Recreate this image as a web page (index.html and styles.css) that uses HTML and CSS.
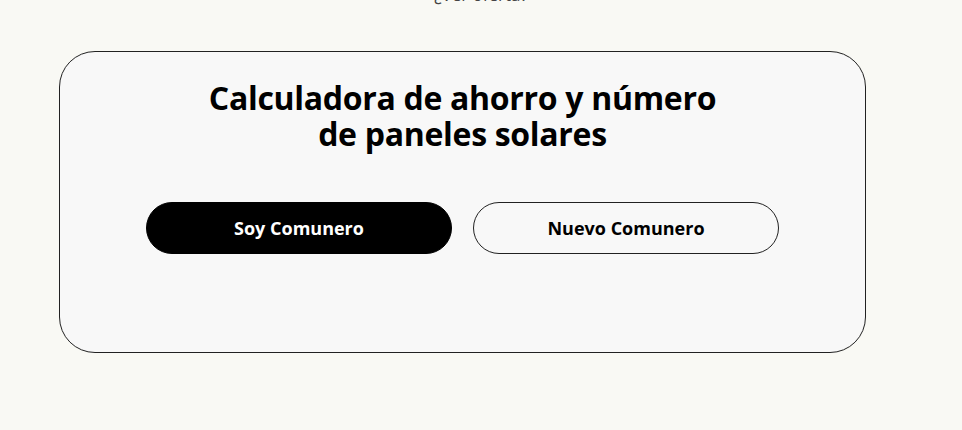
FILE: index.html
```html
<!DOCTYPE html>
<html lang="es">
<head>
<meta charset="utf-8">
<link rel="stylesheet" href="styles.css">
</head>
<body>
<p class="top-note">¿Ver oferta?</p>
<section class="card">
  <h1 class="title">Calculadora de ahorro y número<br>de paneles solares</h1>
  <div class="actions">
    <button class="btn btn-dark">Soy Comunero</button>
    <button class="btn btn-light">Nuevo Comunero</button>
  </div>
</section>
</body>
</html>
```
FILE: styles.css
```css
html, body {
  margin: 0;
  padding: 0;
  background: #f9f9f4;
  font-family: "Open Sans", "Liberation Sans", sans-serif;
  color: #000;
}
.top-note {
  margin: -14px 0 0;
  height: 18px;
  line-height: 18px;
  text-align: center;
  font-size: 17px;
  color: #444;
}
.card {
  box-sizing: border-box;
  width: 807px;
  height: 302px;
  margin: 47px 0 0 59px;
  background: #f8f8f8;
  border: 1px solid #222;
  border-radius: 36px;
  padding-top: 28px;
}
.title {
  margin: 0;
  text-align: center;
  font-size: 32px;
  line-height: 36px;
  font-weight: 700;
  letter-spacing: -0.3px;
}
.actions {
  display: flex;
  justify-content: center;
  gap: 21px;
  margin-top: 50px;
}
.btn {
  box-sizing: border-box;
  width: 306px;
  height: 52px;
  border-radius: 26px;
  font-family: inherit;
  font-size: 18px;
  font-weight: 700;
  cursor: pointer;
}
.btn-dark {
  background: #000;
  color: #fff;
  border: 1px solid #000;
}
.btn-light {
  background: transparent;
  color: #000;
  border: 1px solid #222;
}
```
